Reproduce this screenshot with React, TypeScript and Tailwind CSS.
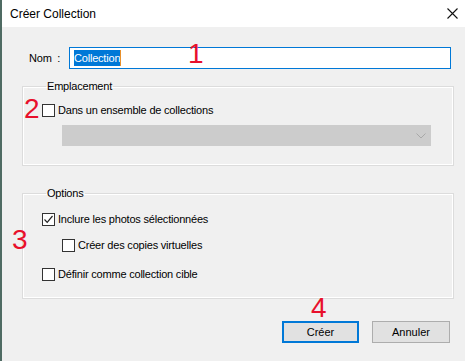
import type { ReactNode } from "react";

const FONT = { fontFamily: '"Segoe UI", "Liberation Sans", Arial, sans-serif' };

function Box({ checked = false }: { checked?: boolean }) {
  return (
    <span className="flex size-[13px] shrink-0 items-center justify-center border border-[#333333] bg-white">
      {checked && (
        <svg width="11" height="11" viewBox="0 0 11 11" fill="none">
          <path d="M1.5 5.5 L4.2 8.3 L9.5 2" stroke="#222" strokeWidth="1.2" />
        </svg>
      )}
    </span>
  );
}

function Check({ label, checked, className = "" }: { label: string; checked?: boolean; className?: string }) {
  return (
    <div className={`flex items-center gap-[3px] ${className}`}>
      <Box checked={checked} />
      <span className="text-[11px] leading-[14px] tracking-[-0.2px] text-black">{label}</span>
    </div>
  );
}

function Group({ title, children, className = "" }: { title: string; children: ReactNode; className?: string }) {
  return (
    <fieldset
      className={`ml-[20px] mr-[11px] border border-[#dcdcdc] px-[19px] shadow-[inset_0_0_0_1px_#ffffff] ${className}`}
    >
      <legend className="ml-[4px] px-[1px] text-[11px] leading-[14px] tracking-[-0.2px] text-black">{title}</legend>
      {children}
    </fieldset>
  );
}

function Mark({ n, className }: { n: string; className: string }) {
  return (
    <span
      className={`absolute text-[28px] leading-none text-[#e8102c] ${className}`}
      style={{ fontFamily: '"Liberation Sans", Arial, sans-serif' }}
    >
      {n}
    </span>
  );
}

export default function App() {
  return (
    <div className="relative h-[361px] w-[465px] overflow-hidden border-l-2 border-[#4f6b63] bg-[#f0f0f0]" style={FONT}>
      {/* title bar */}
      <div className="flex h-[27px] items-center justify-between bg-white pl-[8px] pr-[7px]">
        <span className="text-[12px] text-black">Créer Collection</span>
        <svg width="11" height="11" viewBox="0 0 11 11">
          <path d="M0.5 0.5 L10.5 10.5 M10.5 0.5 L0.5 10.5" stroke="#111" strokeWidth="1.1" />
        </svg>
      </div>

      {/* name */}
      <div className="mt-[20px] flex items-center pl-[27px]">
        <span className="w-[40px] text-[11px] tracking-[-0.2px] text-black">Nom&nbsp;&nbsp;:</span>
        <div className="flex h-[22px] w-[382px] items-center border border-[#0078d7] bg-white pl-[4px]">
          <span className="bg-[#0078d7] text-[11px] leading-[16px] tracking-[-0.2px] text-white">Collection</span>
          <span className="h-[16px] w-px bg-[#e8902b]" />
        </div>
      </div>

      {/* emplacement */}
      <Group title="Emplacement" className="mt-[10px] h-[87px] pt-[10px]">
        <Check label="Dans un ensemble de collections" />
        <div className="ml-[20px] mt-[8px] flex h-[21px] w-[369px] items-center justify-end bg-[#cccccc] pr-[5px]">
          <svg width="10" height="6" viewBox="0 0 10 6" fill="none">
            <path d="M0.5 0.5 L5 5 L9.5 0.5" stroke="#a8a8a8" strokeWidth="1" />
          </svg>
        </div>
      </Group>

      {/* options */}
      <Group title="Options" className="mt-[20px] h-[113px] pt-[12px]">
        <Check label="Inclure les photos sélectionnées" checked />
        <Check label="Créer des copies virtuelles" className="ml-[20px] mt-[12px]" />
        <Check label="Définir comme collection cible" className="mt-[15px]" />
      </Group>

      {/* buttons */}
      <div className="mt-[22px] flex justify-end gap-[13px] pr-[15px]">
        <button className="h-[22px] w-[77px] border-2 border-[#0078d7] bg-[#e1e1e1] text-[11px] text-black">
          Créer
        </button>
        <button className="h-[22px] w-[78px] border border-[#adadad] bg-[#e1e1e1] text-[11px] text-black">
          Annuler
        </button>
      </div>

      <Mark n="1" className="left-[186px] top-[40px]" />
      <Mark n="2" className="left-[22px] top-[95px]" />
      <Mark n="3" className="left-[10px] top-[226px]" />
      <Mark n="4" className="left-[309px] top-[294px]" />
    </div>
  );
}
